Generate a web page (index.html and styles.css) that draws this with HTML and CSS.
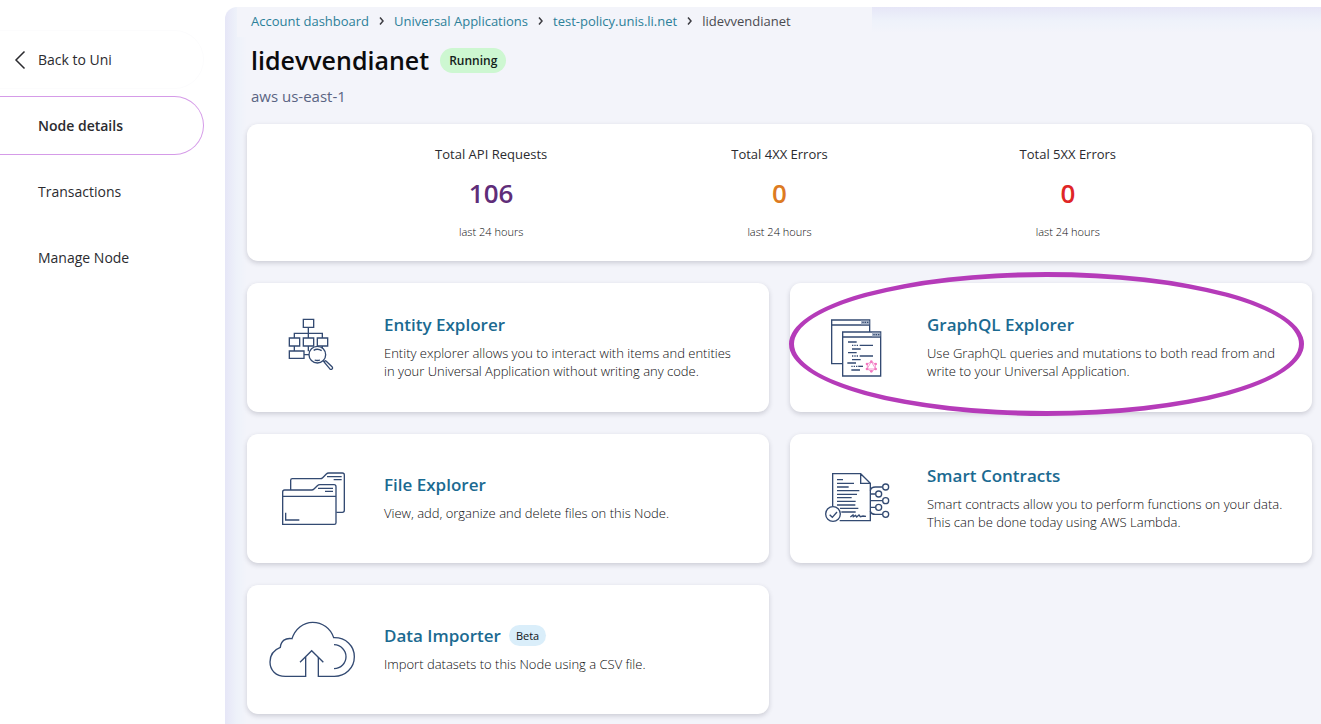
FILE: index.html
```html
<!DOCTYPE html>
<html lang="en">
<head>
<meta charset="utf-8">
<meta name="viewport" content="width=device-width, initial-scale=1">
<title>Node details</title>
<link rel="stylesheet" href="styles.css">
</head>
<body>
<div class="app">
  <nav class="sidebar" aria-label="Node">
    <a class="nav-item nav-back" href="#">
      <svg class="back-icon" viewBox="0 0 12 20" aria-hidden="true"><path d="M10.500 1.500 2 10l8.500 8.500"/></svg>
      Back to Uni
    </a>
    <a class="nav-item nav-active" href="#" aria-current="page">Node details</a>
    <a class="nav-item" href="#">Transactions</a>
    <a class="nav-item" href="#">Manage Node</a>
  </nav>

  <main class="main">
    <header class="header">
      <nav class="breadcrumbs" aria-label="Breadcrumb">
        <a href="#">Account dashboard</a>
        <svg class="crumb-sep" viewBox="0 0 5 10" aria-hidden="true"><path d="m1 1.500 3 3.500L1 8.500"/></svg>
        <a href="#">Universal Applications</a>
        <svg class="crumb-sep" viewBox="0 0 5 10" aria-hidden="true"><path d="m1 1.500 3 3.500L1 8.500"/></svg>
        <a href="#">test-policy.unis.li.net</a>
        <svg class="crumb-sep" viewBox="0 0 5 10" aria-hidden="true"><path d="m1 1.500 3 3.500L1 8.500"/></svg>
        <span>lidevvendianet</span>
      </nav>
      <div class="title-row">
        <h1>lidevvendianet</h1>
        <span class="status">Running</span>
      </div>
      <p class="region">aws us-east-1</p>
    </header>

    <section class="stats card">
      <div class="stat">
        <h2>Total API Requests</h2>
        <strong class="purple">106</strong>
        <small>last 24 hours</small>
      </div>
      <div class="stat">
        <h2>Total 4XX Errors</h2>
        <strong class="orange">0</strong>
        <small>last 24 hours</small>
      </div>
      <div class="stat">
        <h2>Total 5XX Errors</h2>
        <strong class="red">0</strong>
        <small>last 24 hours</small>
      </div>
    </section>

    <section class="tools">
      <article class="tool card">
        <svg class="tool-icon" viewBox="0 7 270 270" aria-hidden="true">
          <path d="M100 56h31v24h-31zM58 112h31v24H58zM100 112h31v24h-31zM142 112h31v24h-31zM58 151h44v22H58zM115 80v32M73 112V98h84v14M73 136v15M115 136v16M102 162h16M157 136v8"/>
          <circle class="paper" cx="142" cy="162" r="25"/>
          <path d="M131 149q11-7 24 1M134 178q8 3 16 0M160 181l5 5"/>
          <path d="m168 181 18 17c5 6-2 11-7 6l-15-18c-2-4 1-7 4-5z"/>
        </svg>
        <div class="tool-text">
          <h2><a href="#">Entity Explorer</a></h2>
          <p>Entity explorer allows you to interact with items and entities in your Universal Application without writing any code.</p>
        </div>
      </article>

      <article class="tool card highlighted">
        <svg class="tool-icon" viewBox="-6 -7 270 270" aria-hidden="true">
          <path class="paper" d="M50 44h114v131H50zM50 59h114"/>
          <path class="tab" d="M138 46h25v11h-25z"/>
          <path class="paper" d="M83 80h114v132H83zM83 95h114"/>
          <path class="tab" d="M171 82h25v11h-25z"/>
          <path class="dots" d="M142 51h18M175 88h18"/>
          <path d="M99 110h26M111 131h26M99 142h26M111 163h26M97 173h26M109 194h26M135 120h39M135 152h39"/>
          <path class="dots" d="M111 120h22M111 152h22M109 183h22"/>
          <path d="M130 183h14"/>
          <path class="pink" d="m169 169 12 7v15l-12 7-12-7v-15zM169 169l13 22h-26z"/>
          <g class="pink-dots"><circle cx="169" cy="169" r="4"/><circle cx="182" cy="176" r="4"/><circle cx="182" cy="191" r="4"/><circle cx="169" cy="198" r="4"/><circle cx="156" cy="191" r="4"/><circle cx="156" cy="176" r="4"/></g>
        </svg>
        <div class="tool-text">
          <h2><a href="#">GraphQL Explorer</a></h2>
          <p>Use GraphQL queries and mutations to both read from and write to your Universal Application.</p>
        </div>
      </article>

      <article class="tool card">
        <svg class="tool-icon" viewBox="0 -4 270 270" aria-hidden="true">
          <path d="M62 104V75q0-5 5-5h84q4 0 7-3l11-11q3-3 7-3h41q6 0 6 6v106q0 6-6 6h-18"/>
          <path d="M171 64h44M191 73h24"/>
          <path d="M38 206v-96q0-6 6-6h81q4 0 7-3l10-10q3-3 8-3h42q6 0 6 6v108q0 5-5 5H38zM38 123h160M144 99h45M165 108h24M47 172v22h41"/>
        </svg>
        <div class="tool-text">
          <h2><a href="#">File Explorer</a></h2>
          <p>View, add, organize and delete files on this Node.</p>
        </div>
      </article>

      <article class="tool card">
        <svg class="tool-icon" viewBox="-6 -4 270 270" aria-hidden="true">
          <path d="M53 153V55h84l29 29v112H74M137 55v29h29M66 73h18M66 84h51M66 95h35M66 106h67M66 117h60M66 127h44M66 138h56M66 149h55M75 159h55M79 170h43"/>
          <path d="M106 185l8-6 1 5 7-4 3 5 7-6 4 5 8-2 9 1"/>
          <path d="M166 106q2-11 15-11h20M166 116h15M166 136h36M166 156h15M166 167q2 10 15 10h20"/>
          <circle class="paper" cx="212" cy="95" r="9"/><circle class="paper" cx="191" cy="116" r="9"/><circle class="paper" cx="212" cy="136" r="9"/><circle class="paper" cx="191" cy="156" r="9"/><circle class="paper" cx="212" cy="177" r="9"/>
          <circle class="paper" cx="54" cy="176" r="22"/>
          <path d="m44 178 8 8 14-16"/>
        </svg>
        <div class="tool-text">
          <h2><a href="#">Smart Contracts</a></h2>
          <p>Smart contracts allow you to perform functions on your data. This can be done today using AWS Lambda.</p>
        </div>
      </article>

      <article class="tool card">
        <svg class="tool-icon" viewBox="30 0 270 270" aria-hidden="true">
          <path d="M137 156v58H76c-29 0-46-19-46-43 0-21 13-37 31-44 2-20 15-29 35-26 9-28 33-49 62-49s54 18 63 46c36-1 62 24 62 57 0 34-27 59-60 59h-48v-58"/>
          <path d="m120 172 35-35 35 35M222 119c21 1 36 17 36 36s-15 35-36 36"/>
        </svg>
        <div class="tool-text">
          <h2><a href="#">Data Importer</a> <span class="beta">Beta</span></h2>
          <p>Import datasets to this Node using a CSV file.</p>
        </div>
      </article>
    </section>
  </main>
</div>
</body>
</html>
```
FILE: styles.css
```css
* {
  box-sizing: border-box;
}

body,
h1,
h2,
p {
  margin: 0;
}

body {
  background: #fff;
  color: #2b2b2f;
  font-family: "Open Sans", "Noto Sans", sans-serif;
  font-size: 13px;
}

a {
  color: inherit;
  text-decoration: none;
}

.app {
  display: grid;
  grid-template-columns: 225px 1fr;
  min-height: 100vh;
  padding-top: 7px;
}

.sidebar {
  display: flex;
  flex-direction: column;
  gap: 7px;
  padding: 23px 21px 0 0;
}

.nav-item {
  display: flex;
  align-items: center;
  height: 59px;
  padding-left: 38px;
  border: 1px solid transparent;
  border-left: 0;
  border-radius: 0 30px 30px 0;
  font-size: 14px;
}

.nav-back {
  gap: 12px;
  padding-left: 14px;
  border-color: #fcfcfd;
}

.nav-active {
  border-color: #d59be8;
  font-weight: 600;
}

.back-icon {
  width: 12px;
  height: 20px;
  fill: none;
  stroke: #2b2b2f;
  stroke-width: 1.5;
}

.main {
  padding: 5px 9px 9px 22px;
  border-top-left-radius: 12px;
  background:
    linear-gradient(#f3f4fa, #f3f4fa) 12px 0 / 635px 30px no-repeat,
    linear-gradient(90deg, #e6e6f7, #eef2fa 12px, rgba(243, 244, 250, 0) 22px),
    linear-gradient(#e6e6f7, #eef2fa 14px, #f3f4fa 26px);
}

.header {
  padding-left: 4px;
}

.breadcrumbs {
  display: flex;
  align-items: center;
  gap: 10px;
  line-height: 18px;
  color: #4a4a50;
}

.breadcrumbs a {
  color: #2c8099;
}

.crumb-sep {
  width: 5px;
  height: 10px;
  fill: none;
  stroke: #3c3c42;
  stroke-width: 1.5;
}

.title-row {
  display: flex;
  align-items: center;
  gap: 11px;
  margin-top: 12px;
}

h1 {
  color: #0b0b0d;
  font-size: 25px;
  font-weight: 600;
  line-height: 36px;
}

.status {
  padding: 0 9px;
  border-radius: 13px;
  background: #cdf7d1;
  color: #14211a;
  font-size: 12px;
  font-weight: 600;
  line-height: 25px;
}

.region {
  margin-top: 8px;
  color: #5a6483;
  font-size: 15px;
  line-height: 20px;
}

.card {
  border-radius: 11px;
  background: #fff;
  box-shadow: 0 2px 5px rgba(30, 30, 50, 0.18);
}

.stats {
  display: grid;
  grid-template-columns: repeat(3, 1fr);
  margin-top: 18px;
  padding: 21px 100px;
  text-align: center;
}

.stat {
  display: flex;
  flex-direction: column;
}

.stat h2 {
  font-size: 13px;
  font-weight: 400;
  line-height: 18px;
}

.stat strong {
  margin: 11px 0 12px;
  font-size: 26px;
  font-weight: 600;
  line-height: 38px;
}

.stat small {
  color: #0c0c0e;
  font-size: 11px;
  font-weight: 300;
  line-height: 16px;
}

.purple {
  color: #5f2d79;
}

.orange {
  color: #dd7a22;
}

.red {
  color: #df2626;
}

.tools {
  display: grid;
  grid-template-columns: repeat(2, 1fr);
  gap: 22px 21px;
  margin-top: 22px;
}

.tool {
  display: flex;
  align-items: center;
  gap: 24px;
  min-height: 129px;
  padding: 0 26px 0 23px;
}

.tool-icon {
  flex: none;
  width: 90px;
  height: 90px;
  overflow: visible;
  fill: none;
  stroke: #334a72;
  stroke-width: 4;
}

.tool-icon .paper {
  fill: #fff;
}

.tool-icon .tab {
  fill: #a9b4c8;
  stroke: none;
}

.tool-icon .dots {
  stroke-dasharray: 4 3;
}

.tool-icon .pink {
  stroke: #f49ad0;
  stroke-width: 3;
}

.tool-icon .pink-dots {
  fill: #f277c0;
  stroke: none;
}

.tool-text {
  padding-bottom: 3px;
}

.tool h2 {
  display: flex;
  align-items: center;
  gap: 8px;
  margin-bottom: 7px;
  color: #1b6a91;
  font-size: 17px;
  font-weight: 600;
  line-height: 24px;
}

.tool p {
  color: #0c0c0e;
  font-weight: 300;
  line-height: 18px;
}

.beta {
  padding: 0 7px;
  border-radius: 11px;
  background: #daeefa;
  color: #101418;
  font-size: 11px;
  font-weight: 400;
  line-height: 21px;
}

.highlighted {
  position: relative;
}

.highlighted::after {
  content: "";
  position: absolute;
  inset: -11px 8px -4px -1px;
  border: 5px solid #b53bb9;
  border-radius: 50%;
  pointer-events: none;
}
```
